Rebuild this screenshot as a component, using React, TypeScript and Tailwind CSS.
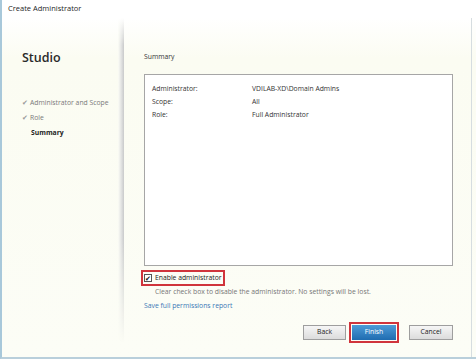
export default function App() {
  const font = { fontFamily: '"Open Sans", "Noto Sans", sans-serif' };
  return (
    <div className="w-[476px] h-[359px] bg-white flex flex-col overflow-hidden relative" style={font}>
      <div className="h-[18px] flex items-center pl-[6px] text-[7.5px] text-[#1e1e1e] border-l-2 border-[#a8c8da] bg-white">
        Create Administrator
      </div>
      <div className="flex-1 flex border-l-2 border-[#a8c8da] border-b-2 border-b-[#b9cfdb] bg-gradient-to-b from-white via-[#fbfcf2] via-[12%] to-[#fcfdf6]">
        <div className="w-[116px] flex flex-col pl-[20px] pt-[31px]">
          <div className="text-[12.5px] font-semibold text-[#2a2a2a] leading-[18px]">Studio</div>
          <div className="mt-[31px] flex flex-col gap-[5px] text-[6.8px] leading-[10px] text-[#7a7a7a]">
            <div className="flex items-center gap-[2px]"><span className="text-[#9a9a9a] text-[7px]">✔</span>Administrator and Scope</div>
            <div className="flex items-center gap-[2px]"><span className="text-[#9a9a9a] text-[7px]">✔</span>Role</div>
            <div className="pl-[9px] font-bold text-[#222]">Summary</div>
          </div>
        </div>
        <div className="w-[6px] bg-gradient-to-r from-[#fcfdf6] via-[#e4e5e4] to-[#c9cacb] [mask-image:linear-gradient(to_bottom,transparent_0%,black_8%,black_65%,transparent_96%)]"></div>
        <div className="flex-1 flex flex-col pl-[20px] pr-[18px] pt-[34px] border-r border-[#d6dde0] mr-[4px]">
          <div className="text-[6.8px] text-[#333] leading-[10px]">Summary</div>
          <div className="mt-[12px] h-[192px] border border-[#a6a6a6] bg-white pl-[7px] pt-[7px] text-[6.8px] leading-[13px] text-[#333]">
            <div className="flex"><span className="w-[100px]">Administrator:</span><span>VDILAB-XD\Domain Admins</span></div>
            <div className="flex"><span className="w-[100px]">Scope:</span><span>All</span></div>
            <div className="flex"><span className="w-[100px]">Role:</span><span>Full Administrator</span></div>
          </div>
          <div className="mt-[4px] self-start flex items-center gap-[3px] border-2 border-[#d0343c] pl-[1px] pr-[1px] h-[16px] -ml-[3px]">
            <span className="w-[8px] h-[8px] border border-[#555] bg-white flex items-center justify-center text-[7px] leading-none text-[#111]">✔</span>
            <span className="text-[6.8px] text-[#222]">Enable administrator</span>
          </div>
          <div className="pl-[11px] mt-[1px] text-[6.8px] leading-[10px] text-[#777]">Clear check box to disable the administrator. No settings will be lost.</div>
          <div className="mt-[4px] text-[6.8px] leading-[10px] text-[#3a78b5]">Save full permissions report</div>
          <div className="mt-[11px] flex justify-end items-center">
            <div className="w-[43px] h-[15px] border border-[#9e9e9e] bg-gradient-to-b from-[#f6f6f6] to-[#dcdcdc] flex items-center justify-center text-[6.8px] text-[#222]">Back</div>
            <div className="ml-[3px] p-[1px] border-2 border-[#d0343c]">
              <div className="w-[44px] h-[15px] bg-gradient-to-b from-[#4c9bd8] to-[#1f6cb0] flex items-center justify-center text-[6.8px] text-white">Finish</div>
            </div>
            <div className="ml-[10px] w-[44px] h-[15px] border border-[#9e9e9e] bg-gradient-to-b from-[#f6f6f6] to-[#dcdcdc] flex items-center justify-center text-[6.8px] text-[#222]">Cancel</div>
          </div>
        </div>
      </div>
    </div>
  );
}
